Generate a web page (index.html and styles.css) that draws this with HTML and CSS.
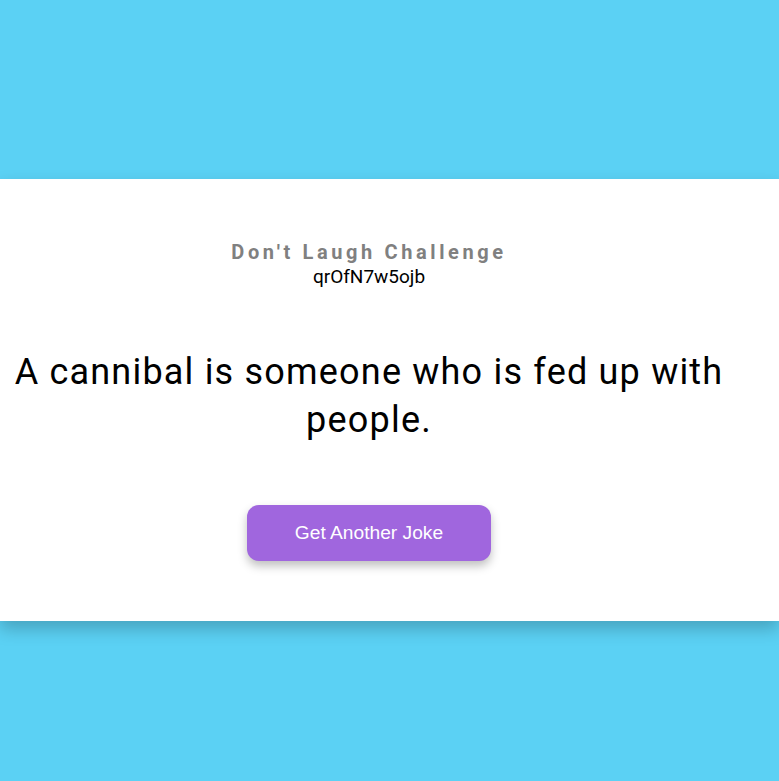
FILE: index.html
```html
<!DOCTYPE html>
<html>
<head>
<meta charset="utf-8">
<link rel="stylesheet" href="styles.css">
</head>
<body>
<div class="page">
  <div class="card">
    <div class="inner">
      <h1 class="title">Don't Laugh Challenge</h1>
      <div class="code">qrOfN7w5ojb</div>
      <p class="joke">A cannibal is someone who is fed up with people.</p>
      <button class="btn">Get Another Joke</button>
    </div>
  </div>
</div>
</body>
</html>
```
FILE: styles.css
```css
html, body {
  margin: 0;
  padding: 0;
  background: #5bd1f4;
  height: 100%;
}
.page {
  height: 781px;
  display: flex;
  flex-direction: column;
  justify-content: flex-start;
  padding-top: 179px;
  box-sizing: border-box;
}
.card {
  background: #fff;
  height: 442px;
  box-shadow: 0 8px 16px rgba(0,0,0,0.22);
}
.inner {
  width: 738px;
  display: flex;
  flex-direction: column;
  align-items: center;
  text-align: center;
  font-family: Roboto, sans-serif;
  padding-top: 61px;
  box-sizing: border-box;
}
.title {
  margin: 0;
  font-size: 20px;
  font-weight: 700;
  letter-spacing: 3.6px;
  color: #808080;
  line-height: 24px;
}
.code {
  font-size: 19px;
  color: #000;
  line-height: 24px;
  margin-top: 1px;
}
.joke {
  margin: 59px 0 0;
  font-size: 36px;
  font-weight: 400;
  line-height: 48px;
  color: #000;
  letter-spacing: 1.2px;
}
.btn {
  margin-top: 61px;
  width: 244px;
  height: 56px;
  border: none;
  border-radius: 12px;
  background: #a066de;
  color: #fff;
  font-family: "Liberation Sans", Arial, sans-serif;
  font-size: 19.2px;
  box-shadow: 0 5px 10px rgba(0,0,0,0.25);
}
```
